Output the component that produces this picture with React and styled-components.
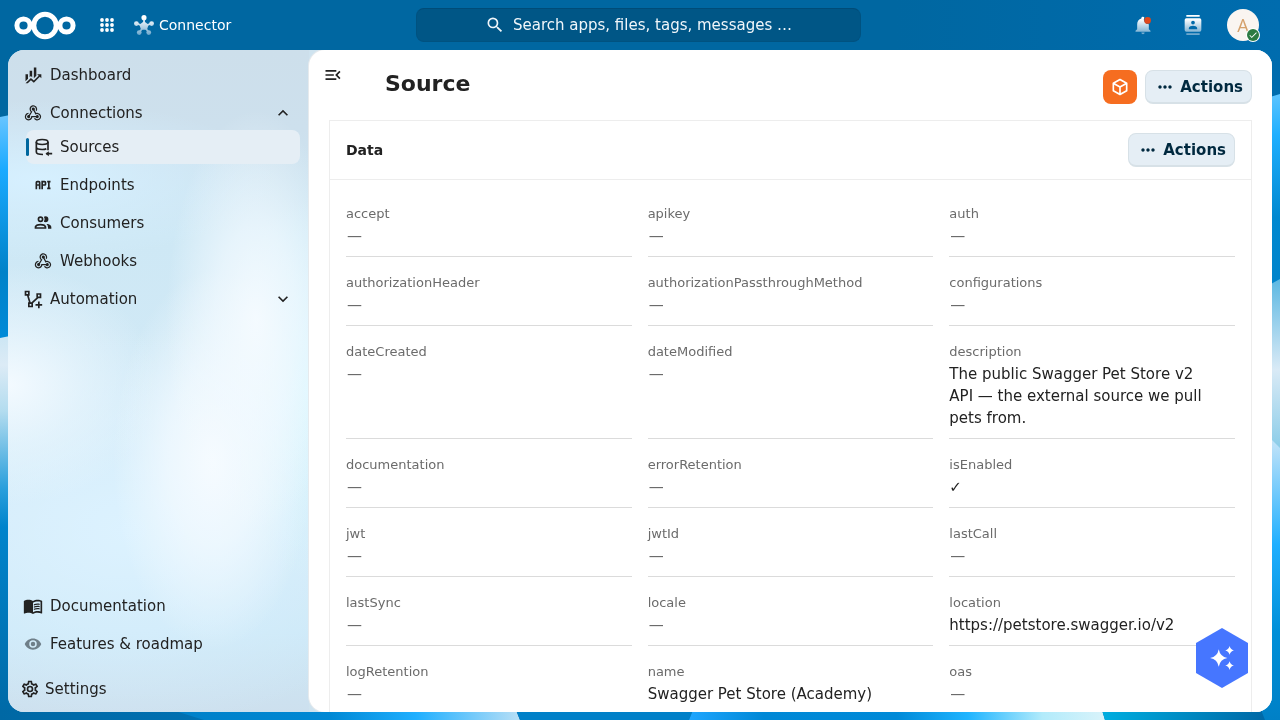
import React, { useState } from "react";
import styled, { createGlobalStyle } from "styled-components";
import {
  MdMenuBook,
  MdMenuOpen,
  MdMoreHoriz,
  MdSearch,
  MdCheck,
} from "react-icons/md";

const paths = {
  finance:
    "M6,16.5L3,19.44V11H6M11,14.66L9.43,13.32L8,14.64V7H11M16,13L13,16V3H16M18.81,12.81L17,11H22V16L20.21,14.21L13,21.36L9.53,18.34L5.75,22H3L9.47,15.66L13,18.64",
  webhook:
    "M10.46,19C9,21.07 6.15,21.59 4.09,20.15C2.04,18.71 1.56,15.84 3,13.75C3.87,12.5 5.21,11.83 6.58,11.77L6.63,13.2C5.72,13.27 4.84,13.74 4.27,14.56C3.27,16 3.58,17.94 4.95,18.91C6.33,19.87 8.26,19.5 9.26,18.07C9.57,17.62 9.75,17.13 9.82,16.63V15.62L15.4,15.58L15.47,15.47C16,14.55 17.15,14.23 18.05,14.75C18.95,15.27 19.26,16.43 18.73,17.35C18.2,18.26 17.04,18.58 16.14,18.06C15.73,17.83 15.44,17.46 15.31,17.04L11.24,17.06C11.13,17.73 10.87,18.38 10.46,19M17.74,11.86C20.27,12.17 22.07,14.44 21.76,16.93C21.45,19.43 19.15,21.2 16.62,20.89C15.13,20.71 13.9,19.86 13.19,18.68L14.43,17.96C14.92,18.73 15.75,19.28 16.75,19.41C18.5,19.62 20.05,18.43 20.26,16.76C20.47,15.09 19.23,13.56 17.5,13.35C16.96,13.29 16.44,13.36 15.97,13.53L15.12,13.97L12.54,9.2H12.32C11.26,9.16 10.41,8.29 10.44,7.25C10.47,6.21 11.4,5.4 12.45,5.44C13.5,5.5 14.33,6.35 14.3,7.39C14.28,7.83 14.11,8.23 13.84,8.54L15.74,12.05C16.36,11.85 17.04,11.78 17.74,11.86M8.25,9.14C7.25,6.79 8.31,4.1 10.62,3.12C12.94,2.14 15.62,3.25 16.62,5.6C17.21,6.97 17.09,8.47 16.42,9.67L15.18,8.95C15.6,8.14 15.67,7.15 15.27,6.22C14.59,4.62 12.78,3.85 11.23,4.5C9.67,5.16 8.97,7 9.65,8.6C9.93,9.26 10.4,9.77 10.97,10.11L11.36,10.32L8.29,15.31C8.32,15.36 8.36,15.42 8.39,15.5C8.88,16.41 8.54,17.56 7.62,18.05C6.71,18.54 5.56,18.18 5.06,17.24C4.57,16.31 4.91,15.16 5.83,14.67C6.22,14.46 6.65,14.41 7.06,14.5L9.37,10.73C8.9,10.3 8.5,9.76 8.25,9.14Z",
  api: "M7 7H5A2 2 0 0 0 3 9V17H5V13H7V17H9V9A2 2 0 0 0 7 7M7 11H5V9H7M14 7H10V17H12V13H14A2 2 0 0 0 16 11V9A2 2 0 0 0 14 7M14 11H12V9H14M20 9V15H21V17H17V15H18V9H17V7H21V9Z",
  people:
    "M13.07 10.41A5 5 0 0 0 13.07 4.59A3.39 3.39 0 0 1 15 4A3.5 3.5 0 0 1 15 11A3.39 3.39 0 0 1 13.07 10.41M5.5 7.5A3.5 3.5 0 1 1 9 11A3.5 3.5 0 0 1 5.5 7.5M7.5 7.5A1.5 1.5 0 1 0 9 6A1.5 1.5 0 0 0 7.5 7.5M16 17V19H2V17S2 13 9 13 16 17 16 17M14 17C13.86 16.22 12.67 15 9 15S4.07 16.31 4 17M15.95 13A5.32 5.32 0 0 1 18 17V19H22V17S22 13.37 15.94 13Z",
  eye: "M12,9A3,3 0 0,0 9,12A3,3 0 0,0 12,15A3,3 0 0,0 15,12A3,3 0 0,0 12,9M12,17A5,5 0 0,1 7,12A5,5 0 0,1 12,7A5,5 0 0,1 17,12A5,5 0 0,1 12,17M12,4.5C7,4.5 2.73,7.61 1,12C2.73,16.39 7,19.5 12,19.5C17,19.5 21.27,16.39 23,12C21.27,7.61 17,4.5 12,4.5Z",
  cog: "M12,8A4,4 0 0,1 16,12A4,4 0 0,1 12,16A4,4 0 0,1 8,12A4,4 0 0,1 12,8M12,10A2,2 0 0,0 10,12A2,2 0 0,0 12,14A2,2 0 0,0 14,12A2,2 0 0,0 12,10M10,22C9.75,22 9.54,21.82 9.5,21.58L9.13,18.93C8.5,18.68 7.96,18.34 7.44,17.94L4.95,18.95C4.73,19.03 4.46,18.95 4.34,18.73L2.34,15.27C2.21,15.05 2.27,14.78 2.46,14.63L4.57,12.97L4.5,12L4.57,11L2.46,9.37C2.27,9.22 2.21,8.95 2.34,8.73L4.34,5.27C4.46,5.05 4.73,4.96 4.95,5.05L7.44,6.05C7.96,5.66 8.5,5.32 9.13,5.07L9.5,2.42C9.54,2.18 9.75,2 10,2H14C14.25,2 14.46,2.18 14.5,2.42L14.87,5.07C15.5,5.32 16.04,5.66 16.56,6.05L19.05,5.05C19.27,4.96 19.54,5.05 19.66,5.27L21.66,8.73C21.79,8.95 21.73,9.22 21.54,9.37L19.43,11L19.5,12L19.43,13L21.54,14.63C21.73,14.78 21.79,15.05 21.66,15.27L19.66,18.73C19.54,18.95 19.27,19.04 19.05,18.95L16.56,17.95C16.04,18.34 15.5,18.68 14.87,18.93L14.5,21.58C14.46,21.82 14.25,22 14,22H10M11.25,4L10.88,6.61C9.68,6.86 8.62,7.5 7.85,8.39L5.44,7.35L4.69,8.65L6.8,10.2C6.4,11.37 6.4,12.64 6.8,13.8L4.68,15.36L5.43,16.66L7.86,15.62C8.63,16.5 9.68,17.14 10.87,17.38L11.24,20H12.76L13.13,17.39C14.32,17.14 15.37,16.5 16.14,15.62L18.57,16.66L19.32,15.36L17.2,13.81C17.6,12.64 17.6,11.37 17.2,10.2L19.31,8.65L18.56,7.35L16.15,8.39C15.38,7.5 14.32,6.86 13.12,6.62L12.75,4H11.25Z",
  cube: "M21,16.5C21,16.88 20.79,17.21 20.47,17.38L12.57,21.82C12.41,21.94 12.21,22 12,22C11.79,22 11.59,21.94 11.43,21.82L3.53,17.38C3.21,17.21 3,16.88 3,16.5V7.5C3,7.12 3.21,6.79 3.53,6.62L11.43,2.18C11.59,2.06 11.79,2 12,2C12.21,2 12.41,2.06 12.57,2.18L20.47,6.62C20.79,6.79 21,7.12 21,7.5V16.5M12,4.15L6.04,7.5L12,10.85L17.96,7.5L12,4.15M5,15.91L11,19.29V12.58L5,9.21V15.91M19,15.91V9.21L13,12.58V19.29L19,15.91Z",
  down: "M7.41,8.58L12,13.17L16.59,8.58L18,10L12,16L6,10L7.41,8.58Z",
  up: "M7.41,15.41L12,10.83L16.59,15.41L18,14L12,8L6,14L7.41,15.41Z",
  sparkles:
    "M9 4Q10.2 10.8 17 12Q10.2 13.2 9 20Q7.8 13.2 1 12Q7.8 10.8 9 4ZM19 1Q19.7 4.3 23 5Q19.7 5.7 19 9Q18.3 5.7 15 5Q18.3 4.3 19 1ZM19 15Q19.7 18.3 23 19Q19.7 19.7 19 23Q18.3 19.7 15 19Q18.3 18.3 19 15Z",
};

const Glyph = ({ name, size = 20, color = "currentColor" }) => (
  <svg width={size} height={size} viewBox="0 0 24 24" fill={color} aria-hidden="true">
    <path d={paths[name]} />
  </svg>
);

const DatabaseImport = () => (
  <svg width="20" height="20" viewBox="0 0 24 24" fill="none" stroke="currentColor" strokeWidth="2" aria-hidden="true">
    <ellipse cx="11" cy="6" rx="7" ry="3" />
    <path d="M4 6V18C4 19.7 7.1 21 12 21M18 6V16M4 12C4 13.7 7.1 15 11 15C13.5 15 15 14.6 16 14" />
    <path d="M23 20H16" />
    <path d="M19 17L15 20L19 23Z" fill="currentColor" stroke="none" />
  </svg>
);

const PolylinePlus = () => (
  <svg width="20" height="20" viewBox="0 0 24 24" fill="none" stroke="currentColor" strokeWidth="2" aria-hidden="true">
    <path d="M3 3H7V7H3ZM17 6H21V10H17ZM7 17H11V21H7ZM5.5 7L8.5 17M10.5 17L18 10M19 15V23M15 19H23" />
  </svg>
);

const Logo = () => (
  <svg width="62" height="30" viewBox="0 0 62 30" fill="none" stroke="#fff" strokeWidth="5" role="img" aria-label="Nextcloud">
    <circle cx="31" cy="15.5" r="11.2" />
    <circle cx="9.5" cy="15.5" r="6.6" />
    <circle cx="52.5" cy="15.5" r="6.6" />
  </svg>
);

const AppsGrid = () => (
  <svg width="16" height="16" viewBox="0 0 16 16" fill="#fff" aria-hidden="true">
    {[3, 8, 13].map((y) =>
      [3, 8, 13].map((x) => <circle key={`${x}-${y}`} cx={x} cy={y} r="1.9" />)
    )}
  </svg>
);

// shared fade used by every icon of the top bar
const Fade = ({ id }) => (
  <defs>
    <linearGradient id={id} x1="0" y1="0" x2="0" y2="24" gradientUnits="userSpaceOnUse">
      <stop offset="0.2" stopColor="#fff" />
      <stop offset="0.95" stopColor="#6ea8cd" />
    </linearGradient>
  </defs>
);

const HubIcon = () => (
  <svg width="22" height="22" viewBox="0 0 24 24" aria-hidden="true">
    <Fade id="fadeHub" />
    <g fill="url(#fadeHub)" stroke="url(#fadeHub)">
      <path d="M12 13L12.1 4M12 13L4 10.5M12 13L20 10.5M12 13L7 20M12 13L17 20" strokeWidth="1.8" />
      <g stroke="none">
        <path d="M12 8L17 11.6L15.2 17.2H8.8L7 11.6Z" />
        <circle cx="12" cy="4" r="2.8" />
        <circle cx="3.7" cy="10.4" r="2.6" />
        <circle cx="20.3" cy="10.4" r="2.6" />
        <circle cx="6.8" cy="20.3" r="2.6" />
        <circle cx="17.2" cy="20.3" r="2.6" />
      </g>
    </g>
  </svg>
);

const BellIcon = () => (
  <svg width="20" height="20" viewBox="0 0 24 24" aria-hidden="true">
    <Fade id="fadeBell" />
    <path
      fill="url(#fadeBell)"
      d="M21 19V20H3V19L5 17V11C5 7.9 7 5.2 10 4.3V4A2 2 0 0 1 13.500 2.7A6 6 0 0 0 19 11V17L21 19M14 21A2 2 0 0 1 10 21"
    />
    <circle cx="17.5" cy="6.5" r="4" fill="#e0481c" />
  </svg>
);

const ContactsIcon = () => (
  <svg width="20" height="20" viewBox="0 0 24 24" aria-hidden="true">
    <Fade id="fadeContacts" />
    <path
      fill="url(#fadeContacts)"
      fillRule="evenodd"
      d="M4 0H20V2H4ZM4 22H20V24H4ZM4 4H20A2 2 0 0 1 22 6V18A2 2 0 0 1 20 20H4A2 2 0 0 1 2 18V6A2 2 0 0 1 4 4ZM12 6.75A2.25 2.25 0 1 0 12 11.25A2.25 2.25 0 1 0 12 6.75ZM17 17V15.5C17 13.8 13.7 13 12 13S7 13.8 7 15.5V17Z"
    />
  </svg>
);

const Wallpaper = () => (
  <Backdrop viewBox="0 0 1280 720" preserveAspectRatio="none" aria-hidden="true">
    <defs>
      <linearGradient id="top" x1="0" y1="0" x2="1" y2="0">
        <stop offset="0" stopColor="#0067a1" />
        <stop offset="0.7" stopColor="#0067a1" />
        <stop offset="1" stopColor="#006cae" />
      </linearGradient>
      <linearGradient id="leftBlue" x1="0" y1="0" x2="0" y2="1">
        <stop offset="0" stopColor="#6cc6ff" />
        <stop offset="0.25" stopColor="#1aaaff" />
        <stop offset="0.7" stopColor="#0082c9" />
        <stop offset="1" stopColor="#008ad8" />
      </linearGradient>
      <linearGradient id="leftPale" x1="0" y1="0" x2="0" y2="1">
        <stop offset="0" stopColor="#cbe6f4" />
        <stop offset="0.08" stopColor="#dcebf6" />
        <stop offset="0.2" stopColor="#b3dcef" />
        <stop offset="0.4" stopColor="#2a9fdc" />
        <stop offset="0.5" stopColor="#0084cc" />
        <stop offset="1" stopColor="#0069a6" />
      </linearGradient>
      <linearGradient id="rightBlue" x1="0" y1="0" x2="0" y2="1">
        <stop offset="0" stopColor="#5cc4ff" />
        <stop offset="0.2" stopColor="#1fafff" />
        <stop offset="0.6" stopColor="#0088d0" />
        <stop offset="1" stopColor="#0082c9" />
      </linearGradient>
      <linearGradient id="rightPale" x1="0" y1="0" x2="0" y2="1">
        <stop offset="0" stopColor="#5cb8e2" />
        <stop offset="0.5" stopColor="#d9eaf6" />
        <stop offset="1" stopColor="#7fc8e6" />
      </linearGradient>
      <linearGradient id="rightLow" x1="0" y1="0" x2="0" y2="1">
        <stop offset="0" stopColor="#d6eaf8" />
        <stop offset="0.4" stopColor="#1fafff" />
        <stop offset="0.7" stopColor="#008fd8" />
        <stop offset="1" stopColor="#0080c6" />
      </linearGradient>
      <linearGradient id="bottomDark" x1="0" y1="0" x2="1" y2="0">
        <stop offset="0" stopColor="#0068a4" />
        <stop offset="1" stopColor="#0074b8" />
      </linearGradient>
      <linearGradient id="bottomLeft" x1="0" y1="0" x2="1" y2="0">
        <stop offset="0" stopColor="#0080c8" />
        <stop offset="0.45" stopColor="#0088d4" />
        <stop offset="0.7" stopColor="#1fafff" />
        <stop offset="1" stopColor="#b8dff6" />
      </linearGradient>
      <linearGradient id="bottomRight" x1="0" y1="0" x2="1" y2="0">
        <stop offset="0" stopColor="#1fa6ff" />
        <stop offset="0.18" stopColor="#0088d6" />
        <stop offset="0.5" stopColor="#008ad8" />
        <stop offset="0.67" stopColor="#1fb4ff" />
        <stop offset="0.85" stopColor="#b2ebfb" />
        <stop offset="1" stopColor="#d9f3fa" />
      </linearGradient>
      <linearGradient id="bottomTeal" x1="0" y1="0" x2="1" y2="0">
        <stop offset="0" stopColor="#00aee0" />
        <stop offset="1" stopColor="#0068a6" />
      </linearGradient>
    </defs>
    <rect width="1280" height="720" fill="url(#top)" />
    <path d="M0 117L20 113V340H0Z" fill="url(#leftBlue)" />
    <path d="M0 338L20 334V720H0Z" fill="url(#leftPale)" />
    <path d="M1260 100L1280 94V300H1260Z" fill="url(#rightBlue)" />
    <path d="M1260 290L1280 279V460H1260Z" fill="url(#rightPale)" />
    <path d="M1260 428L1280 448V720H1260Z" fill="url(#rightLow)" />
    <path d="M0 710H300V720H0Z" fill="url(#bottomDark)" />
    <path d="M172 710L204 720H520L516 710Z" fill="url(#bottomLeft)" />
    <path d="M516 710L520 720H689L693 710Z" fill="#0080c8" />
    <path d="M693 710L689 720H1105L1102 710Z" fill="url(#bottomRight)" />
    <path d="M1102 710L1105 720H1265L1261 710Z" fill="url(#bottomTeal)" />
  </Backdrop>
);

const fields = [
  ["accept"],
  ["apikey"],
  ["auth"],
  ["authorizationHeader"],
  ["authorizationPassthroughMethod"],
  ["configurations"],
  ["dateCreated"],
  ["dateModified"],
  [
    "description",
    "The public Swagger Pet Store v2 API — the external source we pull pets from.",
  ],
  ["documentation"],
  ["errorRetention"],
  ["isEnabled", "✓"],
  ["jwt"],
  ["jwtId"],
  ["lastCall"],
  ["lastSync"],
  ["locale"],
  ["location", "https://petstore.swagger.io/v2"],
  ["logRetention"],
  ["name", "Swagger Pet Store (Academy)"],
  ["oas"],
];

const connectionLinks = [
  { label: "Sources", icon: <DatabaseImport /> },
  { label: "Endpoints", icon: <Glyph name="api" /> },
  { label: "Consumers", icon: <Glyph name="people" /> },
  { label: "Webhooks", icon: <Glyph name="webhook" /> },
];

const Actions = () => (
  <ActionsButton type="button">
    <MdMoreHoriz size={20} />
    Actions
  </ActionsButton>
);

export default function App() {
  const [active, setActive] = useState("Sources");
  const [open, setOpen] = useState(true);

  return (
    <Page>
      <GlobalStyle />
      <Wallpaper />
      <TopBar>
        <BarStart>
          <BarLink href="#home">
            <Logo />
          </BarLink>
          <AppsButton type="button" aria-label="Apps">
            <AppsGrid />
          </AppsButton>
          <BarLink href="#connector">
            <HubIcon />
            Connector
          </BarLink>
        </BarStart>
        <SearchButton type="button">
          <MdSearch size={20} />
          Search apps, files, tags, messages …
        </SearchButton>
        <BarEnd>
          <IconButton type="button" aria-label="Notifications">
            <BellIcon />
          </IconButton>
          <IconButton type="button" aria-label="Contacts">
            <ContactsIcon />
          </IconButton>
          <Avatar type="button" aria-label="Account menu">
            A
            <Status>
              <MdCheck size={10} />
            </Status>
          </Avatar>
        </BarEnd>
      </TopBar>

      <Shell>
        <Sidebar>
          <NavList>
            <li>
              <NavLink href="#dashboard">
                <Glyph name="finance" />
                Dashboard
              </NavLink>
            </li>
            <li>
              <NavToggle
                type="button"
                aria-expanded={open}
                onClick={() => setOpen(!open)}
              >
                <Glyph name="webhook" />
                <span>Connections</span>
                <Glyph name={open ? "up" : "down"} />
              </NavToggle>
              {open && (
                <SubList>
                  {connectionLinks.map(({ label, icon }) => (
                    <li key={label}>
                      <NavLink
                        href={`#${label.toLowerCase()}`}
                        $active={active === label}
                        onClick={() => setActive(label)}
                      >
                        {icon}
                        {label}
                      </NavLink>
                    </li>
                  ))}
                </SubList>
              )}
            </li>
            <li>
              <NavToggle type="button" aria-expanded="false">
                <PolylinePlus />
                <span>Automation</span>
                <Glyph name="down" />
              </NavToggle>
            </li>
          </NavList>
          <NavList>
            <li>
              <NavLink href="#documentation">
                <MdMenuBook size={20} />
                Documentation
              </NavLink>
            </li>
            <li>
              <NavLink href="#features">
                <Glyph name="eye" size={18} color="#6f7f89" />
                Features &amp; roadmap
              </NavLink>
            </li>
          </NavList>
          <SettingsButton type="button">
            <Glyph name="cog" />
            Settings
          </SettingsButton>
        </Sidebar>

        <Main>
          <PageHeader>
            <MenuButton type="button" aria-label="Close navigation">
              <MdMenuOpen size={20} />
            </MenuButton>
            <h1>Source</h1>
            <HeaderActions>
              <CubeButton type="button" aria-label="Integrations">
                <Glyph name="cube" />
              </CubeButton>
              <Actions />
            </HeaderActions>
          </PageHeader>
          <Card>
            <CardHeader>
              <h2>Data</h2>
              <Actions />
            </CardHeader>
            <FieldGrid>
              {fields.map(([label, value]) => (
                <Field key={label}>
                  <dt>{label}</dt>
                  {value ? <dd>{value}</dd> : <EmptyValue>—</EmptyValue>}
                </Field>
              ))}
            </FieldGrid>
          </Card>
        </Main>
      </Shell>

      <AssistantButton type="button" aria-label="Assistant">
        <Glyph name="sparkles" size={26} />
      </AssistantButton>
    </Page>
  );
}

const GlobalStyle = createGlobalStyle`
  *, *::before, *::after {
    box-sizing: border-box;
  }
  body {
    margin: 0;
    overflow: hidden;
    font-family: "DejaVu Sans", sans-serif;
    font-size: 15px;
    line-height: 22px;
    color: #222;
  }
  button {
    border: none;
    margin: 0;
    padding: 0;
    background: none;
    font: inherit;
    color: inherit;
    cursor: pointer;
  }
  a {
    color: inherit;
    text-decoration: none;
  }
  h1, h2, ul, dl, dd {
    margin: 0;
    padding: 0;
  }
  ul {
    list-style: none;
  }
  svg {
    flex-shrink: 0;
  }
`;

const Page = styled.div`
  display: flex;
  flex-direction: column;
  height: 100vh;
`;

const Backdrop = styled.svg`
  position: fixed;
  inset: 0;
  z-index: -1;
  width: 100%;
  height: 100%;
`;

const TopBar = styled.header`
  display: grid;
  grid-template-columns: 1fr minmax(0, 445px) 1fr;
  align-items: center;
  height: 50px;
  padding: 0 11px 0 8px;
  color: #fff;
`;

const BarStart = styled.div`
  display: flex;
  align-items: center;
  padding-left: 6px;
`;

const BarLink = styled.a`
  display: flex;
  align-items: center;
  gap: 4px;
  font-size: 14px;
`;

const IconButton = styled.button`
  display: flex;
  align-items: center;
  justify-content: center;
  width: 50px;
  height: 50px;
`;

const AppsButton = styled(IconButton)`
  width: 34px;
  margin: 0 9px 0 14px;
`;

const SearchButton = styled.button`
  display: flex;
  align-items: center;
  justify-content: center;
  gap: 8px;
  height: 34px;
  border: 1px solid #005280;
  border-top-color: #004c78;
  border-radius: 8px;
  background: #005686;
  color: #f0f6fa;
`;

const BarEnd = styled.div`
  display: flex;
  align-items: center;
  justify-content: flex-end;
  padding-right: 10px;
`;

const Avatar = styled.button`
  position: relative;
  width: 32px;
  height: 32px;
  margin-left: 9px;
  border-radius: 50%;
  background: #faf5f1;
  color: #d5a16c;
  font-family: "Open Sans", "Noto Sans", sans-serif;
  font-size: 18px;
`;

const Status = styled.span`
  position: absolute;
  right: 0;
  bottom: 0;
  display: flex;
  align-items: center;
  justify-content: center;
  width: 12px;
  height: 12px;
  border-radius: 50%;
  background: #2d7b43;
  box-shadow: 0 0 0 1px #fff;
  color: #fff;
`;

const Shell = styled.div`
  display: flex;
  flex: 1;
  min-height: 0;
  margin: 0 8px 8px;
  border-radius: 16px;
  overflow: hidden;
  background: #cfe3ef;
`;

const Sidebar = styled.nav`
  display: flex;
  flex-direction: column;
  flex-shrink: 0;
  width: 301px;
  padding: 8px 9px 6px 8px;
  background:
    radial-gradient(ellipse 90px 210px at 248px 270px, #f6fbffee, #f3faffaa 45%, #e6f6ff00),
    radial-gradient(ellipse 100px 190px at 205px 410px, #f6fbff, #f3faffbb 45%, #e6f6ff00),
    radial-gradient(ellipse 150px 120px at 0 335px, #f3faff, #eaf6fd99 50%, #dcf1fc00),
    radial-gradient(ellipse 100px 190px at 301px 340px, #d8f6ff, #d8f6ff00),
    radial-gradient(ellipse 240px 80px at 30px 130px, #d6f0ff, #d6f0ff00),
    radial-gradient(ellipse 300px 200px at 120px 480px, #dcf2ff, #dcf2ff00),
    linear-gradient(#cddfeb, #cde0ed 12%, #cee8f5 28%, #d3eaf7 70%, #cce8f7 88%, #cde0ee);
`;

const NavList = styled.ul`
  display: flex;
  flex-direction: column;
  gap: 4px;

  &:first-child {
    flex: 1;
  }
`;

const SubList = styled(NavList)`
  padding-left: 10px;
`;

const NavLink = styled.a`
  position: relative;
  display: flex;
  align-items: center;
  gap: 7px;
  height: 34px;
  padding: 0 7px;
  border-radius: 8px;
  background: ${(props) => (props.$active ? "#e5eef5" : "none")};

  svg {
    width: 20px;
  }

  &::before {
    content: "";
    display: ${(props) => (props.$active ? "block" : "none")};
    position: absolute;
    left: 0;
    top: 8px;
    width: 3px;
    height: 18px;
    border-radius: 2px;
    background: #00679e;
  }
`;

const NavToggle = styled.button`
  display: flex;
  align-items: center;
  gap: 7px;
  width: 100%;
  height: 34px;
  padding: 0 7px;
  text-align: left;

  span {
    flex: 1;
  }
`;

const SettingsButton = styled.button`
  display: flex;
  align-items: center;
  gap: 5px;
  height: 34px;
  margin-top: 11px;
  padding: 0 4px;
`;

const Main = styled.main`
  flex: 1;
  min-width: 0;
  border-radius: 16px 0 0 16px;
  background: #fff;
  box-shadow: 0 0 0 1px #e6eaed;
  overflow: hidden;
`;

const PageHeader = styled.div`
  display: flex;
  align-items: flex-start;
  padding: 8px 20px 16px 7px;

  h1 {
    flex: 1;
    margin: 12px 0 0 35px;
    font-size: 22px;
    line-height: 28px;
  }
`;

const MenuButton = styled.button`
  display: flex;
  align-items: center;
  justify-content: center;
  width: 34px;
  height: 34px;
`;

const HeaderActions = styled.div`
  display: flex;
  gap: 8px;
  margin-top: 12px;
`;

const CubeButton = styled.button`
  display: flex;
  align-items: center;
  justify-content: center;
  width: 34px;
  height: 34px;
  border-radius: 8px;
  background: #f66d20;
  color: #fff;
`;

const ActionsButton = styled.button`
  display: flex;
  align-items: center;
  gap: 5px;
  height: 34px;
  padding: 0 8px 0 9px;
  border: 1px solid #d7e1e7;
  border-bottom-width: 2px;
  border-radius: 8px;
  background: #e5eef5;
  color: #00293f;
  font-weight: 700;
`;

const Card = styled.section`
  margin: 0 20px;
  border: 1px solid #ededed;
`;

const CardHeader = styled.div`
  display: flex;
  align-items: center;
  justify-content: space-between;
  padding: 12px 16px;
  border-bottom: 1px solid #ededed;

  h2 {
    font-size: 14px;
  }
`;

const FieldGrid = styled.dl`
  display: grid;
  grid-template-columns: repeat(3, minmax(0, 1fr));
  column-gap: 16px;
  padding: 8px 16px;
`;

const Field = styled.div`
  padding: 16px 0 9px;
  border-bottom: 1px solid #dbdbdb;

  dt {
    margin-bottom: 1px;
    font-size: 13px;
    line-height: 20px;
    color: #6b6b6b;
  }

  dd {
    padding-right: 16px;
  }
`;

const EmptyValue = styled.dd`
  padding-left: 1px;
  color: #6b6b6b;
`;

const AssistantButton = styled.button`
  position: fixed;
  right: 32px;
  bottom: 32px;
  display: flex;
  align-items: center;
  justify-content: center;
  width: 52px;
  height: 60px;
  background: #4676ff;
  color: #fff;
  clip-path: polygon(50% 0, 100% 25%, 100% 75%, 50% 100%, 0 75%, 0 25%);
`;
